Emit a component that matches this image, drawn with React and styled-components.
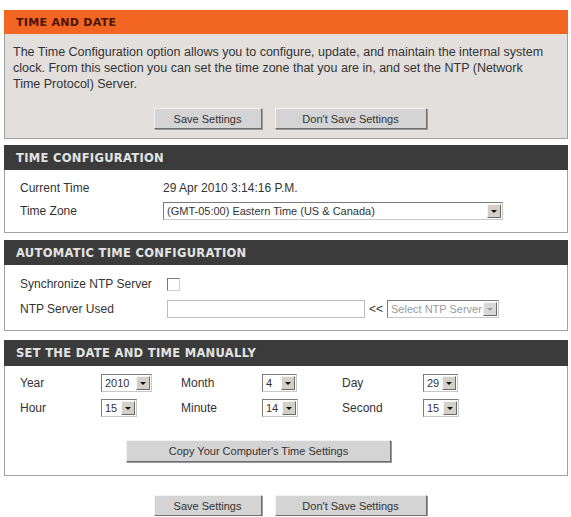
import React from "react";
import { styled, createGlobalStyle } from "styled-components";

const GlobalStyle = createGlobalStyle`
  body {
    margin: 0;
    background: #ffffff;
    font-family: "Liberation Sans", Arial, sans-serif;
    font-size: 12px;
    color: #333;
  }
`;

const Page = styled.div`
  width: 564px;
  margin: 0 4px;
  padding-top: 10px;
  display: flex;
  flex-direction: column;
`;

const Box = styled.div`
  margin-top: ${(p) => p.$mt || 0}px;
  border: 1px solid #a0a0a0;
  background: ${(p) => (p.$intro ? "#e2dfdd" : "#ffffff")};
`;

const BoxHead = styled.div`
  height: ${(p) => p.$h || 25}px;
  display: flex;
  align-items: center;
  padding-left: 12px;
  margin: -1px -1px 0;
  background: ${(p) => (p.$orange ? "#f26522" : "#3b3b3b")};
  color: ${(p) => (p.$orange ? "#4a1400" : "#e4e4e4")};
  font-family: "DejaVu Sans", Verdana, sans-serif;
  font-weight: bold;
  font-size: ${(p) => (p.$orange ? "11px" : "11.5px")};
  letter-spacing: 0.3px;
`;

const Intro = styled.p`
  margin: 0;
  padding: 10px 8px 0 8px;
  font-size: 12.5px;
  line-height: 16px;
`;

const ButtonRow = styled.div`
  display: flex;
  justify-content: ${(p) => (p.$start ? "flex-start" : "center")};
  gap: 13px;
  padding: ${(p) => p.$pad || "0"};
  margin-left: ${(p) => p.$shift || 0}px;
`;

const Button = styled.button`
  width: ${(p) => p.$w || 100}px;
  height: ${(p) => p.$h || 21}px;
  padding: 0;
  font-family: "Liberation Sans", Arial, sans-serif;
  font-size: 11px;
  color: #333;
  background: #d4d4d4;
  border: 1px solid;
  border-color: #f2f2f2 #6e6e6e #6e6e6e #f2f2f2;
  box-shadow: 1px 1px 0 #9a9a9a;
`;

const Body = styled.div`
  padding: ${(p) => p.$pad || "10px 15px 14px"};
  display: flex;
  flex-direction: column;
  gap: ${(p) => p.$gap || "6px"};
`;

const Row = styled.div`
  display: grid;
  grid-template-columns: ${(p) => p.$cols || "143px 1fr"};
  align-items: center;
  height: 18px;
`;

const Select = styled.div`
  width: ${(p) => p.$w}px;
  height: 18px;
  box-sizing: border-box;
  display: flex;
  align-items: center;
  border: 1px solid #7a7a7a;
  border-right-color: #c8c8c8;
  border-bottom-color: #c8c8c8;
  background: #fff;
  font-size: 11px;
  color: ${(p) => (p.$disabled ? "#9a9a9a" : "#333")};
  span {
    flex: 1;
    padding-left: 3px;
    white-space: nowrap;
    overflow: hidden;
  }
`;

const Arrow = styled.div`
  width: 14px;
  height: 14px;
  margin-right: 1px;
  background: ${(p) => (p.$disabled ? "#d8d8d8" : "#d4d0c8")};
  border: 1px solid;
  border-color: #f4f4f4 #6a6a6a #6a6a6a #f4f4f4;
  box-sizing: border-box;
  display: flex;
  align-items: center;
  justify-content: center;
  &::after {
    content: "";
    border-left: 3px solid transparent;
    border-right: 3px solid transparent;
    border-top: 3px solid ${(p) => (p.$disabled ? "#999" : "#111")};
  }
`;

const Check = styled.div`
  width: 11px;
  height: 11px;
  margin-left: 4px;
  border: 1px solid #7a7a7a;
  border-right-color: #d0d0d0;
  border-bottom-color: #d0d0d0;
  background: #fff;
`;

const TextInput = styled.div`
  width: 198px;
  height: 18px;
  margin-left: 4px;
  box-sizing: border-box;
  border: 1px solid #bcbcbc;
  background: #fff;
`;

const Inline = styled.div`
  display: flex;
  align-items: center;
  gap: 4px;
`;

const DropDown = ({ value, w, disabled }) => (
  <Select $w={w} $disabled={disabled}>
    <span>{value}</span>
    <Arrow $disabled={disabled} />
  </Select>
);

const manual = [
  [
    ["Year", "2010", 51],
    ["Month", "4", 35],
    ["Day", "29", 35],
  ],
  [
    ["Hour", "15", 36],
    ["Minute", "14", 36],
    ["Second", "15", 36],
  ],
];

const SaveButtons = ({ pad }) => (
  <ButtonRow $pad={pad} $shift={8}>
    <Button $w={108}>Save Settings</Button>
    <Button $w={152}>Don't Save Settings</Button>
  </ButtonRow>
);

const App = () => {
  return (
    <>
      <GlobalStyle />
      <Page>
        <Box $intro>
          <BoxHead $orange $h={24}>TIME AND DATE</BoxHead>
          <Intro>
            The Time Configuration option allows you to configure, update, and maintain the internal system
            <br />
            clock. From this section you can set the time zone that you are in, and set the NTP (Network
            <br />
            Time Protocol) Server.
          </Intro>
          <SaveButtons pad="16px 0 9px" />
        </Box>

        <Box $mt={6}>
          <BoxHead>TIME CONFIGURATION</BoxHead>
          <Body $pad="9px 15px 12px" $gap="5px">
            <Row>
              <span>Current Time</span>
              <span>29 Apr 2010 3:14:16 P.M.</span>
            </Row>
            <Row>
              <span>Time Zone</span>
              <DropDown w={340} value="(GMT-05:00) Eastern Time (US & Canada)" />
            </Row>
          </Body>
        </Box>

        <Box $mt={7}>
          <BoxHead>AUTOMATIC TIME CONFIGURATION</BoxHead>
          <Body $pad="10px 15px 12px" $gap="7px">
            <Row>
              <span>Synchronize NTP Server</span>
              <Check />
            </Row>
            <Row>
              <span>NTP Server Used</span>
              <Inline>
                <TextInput />
                <span>&lt;&lt;</span>
                <DropDown w={112} value="Select NTP Server" disabled />
              </Inline>
            </Row>
          </Body>
        </Box>

        <Box $mt={9}>
          <BoxHead $h={26}>SET THE DATE AND TIME MANUALLY</BoxHead>
          <Body $pad="8px 15px 13px" $gap="7px">
            {manual.map((row, i) => (
              <Row key={i} $cols="81px 80px 81px 80px 81px 1fr">
                {row.map(([label, value, w]) => (
                  <React.Fragment key={label}>
                    <span>{label}</span>
                    <DropDown w={w} value={value} />
                  </React.Fragment>
                ))}
              </Row>
            ))}
            <ButtonRow $start $pad="16px 0 0 106px">
              <Button $w={265} $h={22}>Copy Your Computer's Time Settings</Button>
            </ButtonRow>
          </Body>
        </Box>

        <SaveButtons pad="19px 0 0" />
      </Page>
    </>
  );
};

export default App;
